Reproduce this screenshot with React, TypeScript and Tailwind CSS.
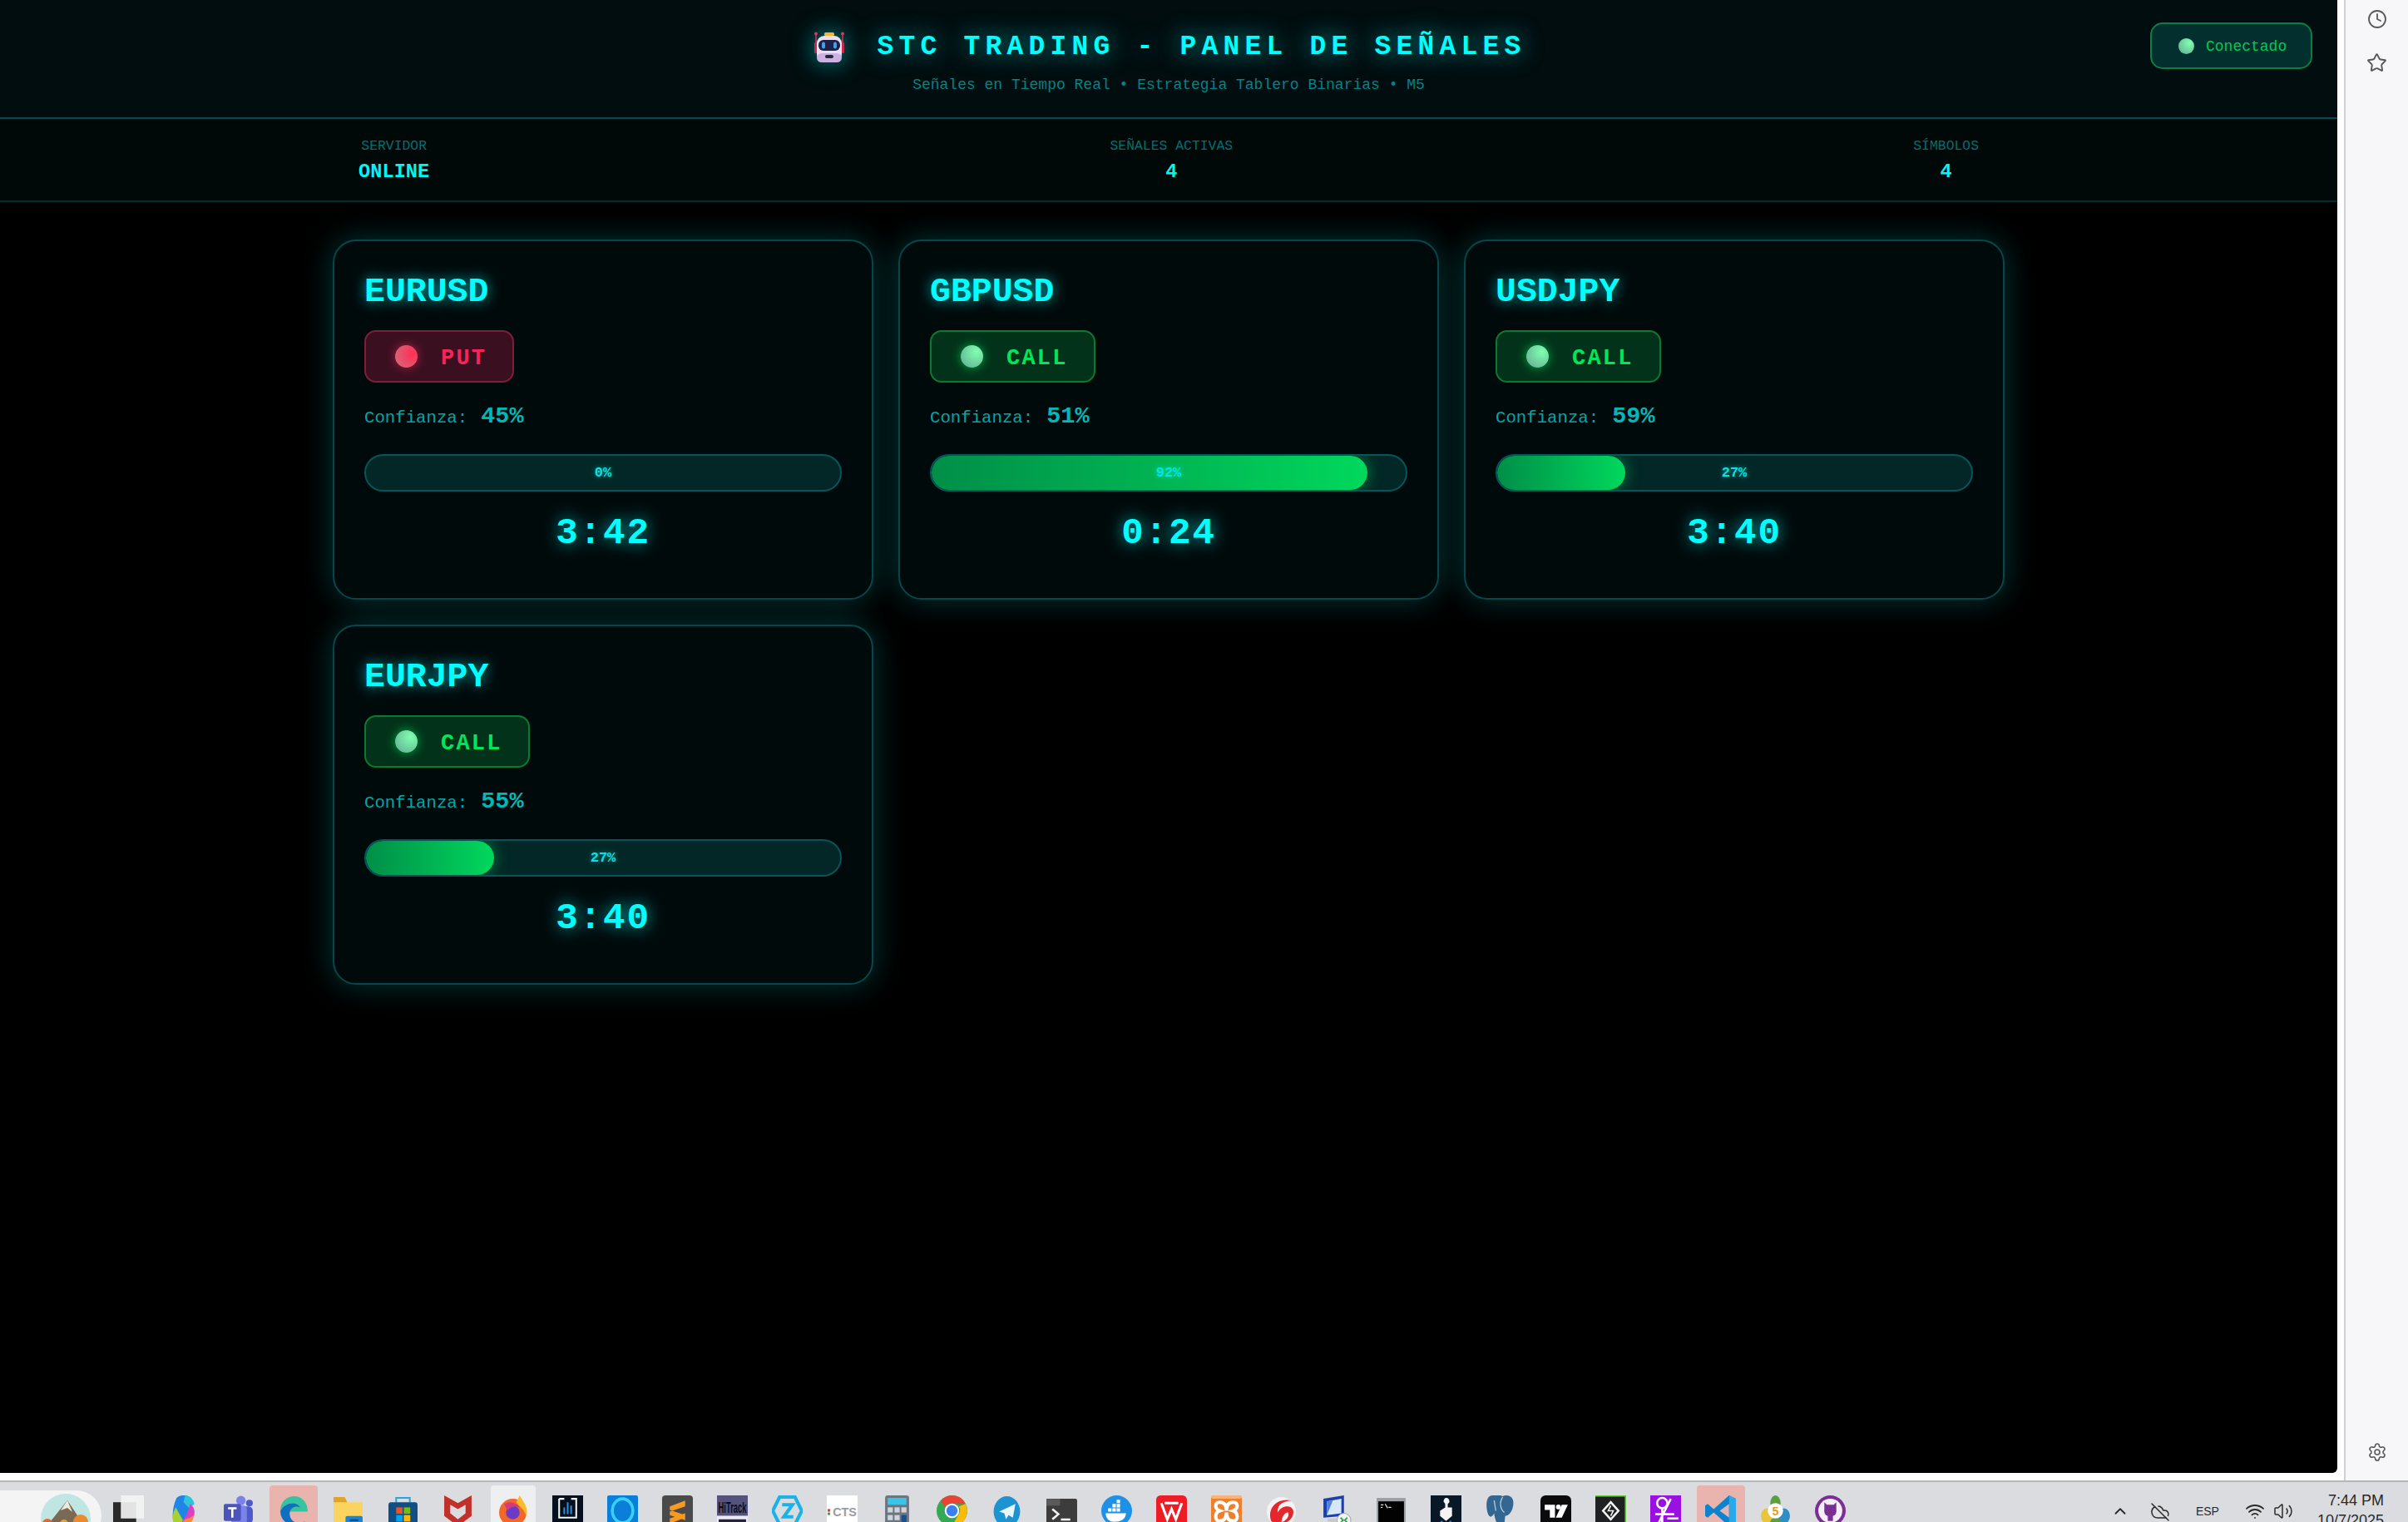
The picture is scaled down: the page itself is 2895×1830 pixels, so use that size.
import React from 'react';
import { Clock, Star, Settings, ChevronUp, Wifi, Volume2, CloudOff } from 'lucide-react';

interface Signal {
  symbol: string;
  side: 'PUT' | 'CALL';
  confidence: number;
  progress: number;
  timer: string;
}

const signals: Signal[] = [
  { symbol: 'EURUSD', side: 'PUT', confidence: 45, progress: 0, timer: '3:42' },
  { symbol: 'GBPUSD', side: 'CALL', confidence: 51, progress: 92, timer: '0:24' },
  { symbol: 'USDJPY', side: 'CALL', confidence: 59, progress: 27, timer: '3:40' },
  { symbol: 'EURJPY', side: 'CALL', confidence: 55, progress: 27, timer: '3:40' },
];

function RobotIcon() {
  return (
    <svg width="38" height="38" viewBox="0 0 38 38" className="drop-shadow-[0_0_14px_rgba(0,255,255,0.55)]">
      <rect x="13" y="1" width="12" height="4" rx="1.5" fill="#f2b632" />
      <path d="M3 3 L3 14 M35 3 L35 14" stroke="#d8345a" strokeWidth="1.5" />
      <circle cx="3" cy="2.5" r="2" fill="#e8305a" />
      <circle cx="35" cy="2.5" r="2" fill="#e8305a" />
      <rect x="1" y="13" width="4" height="13" rx="1" fill="#c8284f" />
      <rect x="33" y="13" width="4" height="13" rx="1" fill="#c8284f" />
      <rect x="4" y="5" width="30" height="32" rx="9" fill="#e9dff0" />
      <rect x="4" y="26" width="30" height="11" rx="6" fill="#cbb2e2" />
      <rect x="6" y="10" width="26" height="13" rx="6" fill="#1d2145" />
      <rect x="10" y="12.5" width="4" height="8" rx="2" fill="#3fa0ee" />
      <rect x="24" y="12.5" width="4" height="8" rx="2" fill="#3fa0ee" />
      <rect x="14" y="28" width="10" height="4" rx="2" fill="#26243c" />
    </svg>
  );
}

function TaskIcon({ children }: { children: React.ReactNode }) {
  return (
    <svg width="37" height="37" viewBox="0 0 36 36">
      {children}
    </svg>
  );
}

const taskIcons: React.ReactNode[] = [
  <>
    <rect x="0" y="8" width="27" height="28" fill="#2a2a2a" />
    <rect x="9" y="0" width="27" height="27" fill="#f3f3f3" opacity="0.92" />
  </>,
  <>
    <path d="M10 3 Q14 -1 22 0 L28 12 L18 32 Q11 38 6 30 Q4 16 10 3Z" fill="#1f86e8" />
    <path d="M20 0 Q28 0 31 10 L25 15 L18 8Z" fill="#2fc4d8" />
    <path d="M9 14 L18 30 Q11 38 6 30 Q4 22 9 14Z" fill="#a8d030" />
    <path d="M26 10 Q35 17 28 30 Q22 38 13 36 L22 22Z" fill="#dc3fc4" />
    <path d="M20 28 Q31 26 33 17 L28 30 Q22 38 13 36Z" fill="#f58a3a" />
  </>,
  <>
    <circle cx="21" cy="6" r="5.5" fill="#7b83eb" />
    <circle cx="31" cy="9" r="4" fill="#5059c9" />
    <rect x="22" y="13" width="13" height="20" rx="5" fill="#5059c9" />
    <rect x="10" y="12" width="18" height="24" rx="4" fill="#7b83eb" />
    <rect x="1" y="10" width="20" height="20" rx="2" fill="#4b53bc" />
    <path d="M6 15 H16 M11 15 V26" stroke="#fff" strokeWidth="2.5" />
  </>,
  <>
    <path d="M3 18 C3 7 11 1 19 1 C29 1 35 9 35 19 L14 19 C15 14 21 11 26 14 C23 7 9 7 3 18Z" fill="#35c3a0" />
    <path d="M3 18 C9 7 23 7 26 14 C19 11 13 16 14 23 C15 31 24 35 32 30 C26 37 3 37 3 18Z" fill="#0f6fc0" />
  </>,
  <>
    <path d="M1 2 H14 L17 8 H35 V36 H1Z" fill="#fbd45f" />
    <path d="M1 2 H14 L17 8 H1Z" fill="#e0a428" />
    <rect x="15" y="24" width="20" height="12" rx="2" fill="#1485d8" />
    <rect x="20" y="28" width="10" height="2" fill="#0b4a80" />
  </>,
  <>
    <path d="M10 8 V3 H26 V8" fill="none" stroke="#29a5d8" strokeWidth="2" />
    <rect x="1" y="8" width="34" height="28" rx="3" fill="#0e4f86" />
    <rect x="10" y="14" width="7.5" height="7.5" fill="#f25022" />
    <rect x="19" y="14" width="7.5" height="7.5" fill="#7fba00" />
    <rect x="10" y="23" width="7.5" height="7.5" fill="#00a4ef" />
    <rect x="19" y="23" width="7.5" height="7.5" fill="#ffb900" />
  </>,
  <path d="M2 0 L18 9 L34 0 V24 L18 36 L2 24Z M9 11 V21 L18 28 L27 21 V11 L18 16Z" fill="#c0312b" fillRule="evenodd" />,
  <>
    <circle cx="18" cy="20" r="16" fill="#f2672a" />
    <path d="M26 0 C32 10 36 14 34 24 C30 14 24 12 22 8Z" fill="#fbbb2c" />
    <circle cx="18" cy="20" r="8" fill="#6b3bc8" />
    <path d="M8 10 C14 6 22 8 26 14 C20 12 14 14 12 18Z" fill="#d63a7a" />
  </>,
  <>
    <rect x="0" y="0" width="36" height="36" fill="#06101c" />
    <path d="M8 4 H14 M8 4 V26 H28 V4 H22" fill="none" stroke="#f4f4f4" strokeWidth="2" />
    <path d="M14 22 V14 M18 22 V8 M22 22 V12" stroke="#2a8fd8" strokeWidth="2" />
  </>,
  <>
    <rect x="0" y="0" width="36" height="36" rx="2" fill="#0a7ed8" />
    <ellipse cx="18" cy="18" rx="12" ry="14" fill="none" stroke="#35d2f5" strokeWidth="3.5" />
  </>,
  <>
    <rect x="0" y="0" width="36" height="36" rx="4" fill="#4a4a4a" />
    <path d="M27 6 L9 13 V19 L27 13Z M9 17 L27 23 V29 L9 23Z M27 26 L9 33 V27 L27 21Z" fill="#f79a1f" />
  </>,
  <>
    <rect x="0" y="0" width="36" height="24" fill="#55527e" />
    <rect x="0" y="24" width="36" height="12" fill="#ece9f4" />
    <rect x="2" y="28" width="32" height="6" fill="#26243c" />
    <text x="18" y="20" textAnchor="middle" fontSize="18" fontFamily="Liberation Sans" fontWeight="700" fill="#0c0c14" textLength="33" lengthAdjust="spacingAndGlyphs">HiTrack</text>
  </>,
  <>
    <path d="M9 2 H27 L35 18 L27 34 H9 L1 18Z" fill="none" stroke="#1ab2e8" strokeWidth="4" />
    <path d="M12 11 H24 L14 25 H25" fill="none" stroke="#1ab2e8" strokeWidth="4" />
  </>,
  <>
    <rect x="0" y="0" width="36" height="36" fill="#ffffff" />
    <rect x="1" y="16" width="3" height="3" fill="#d83a3a" />
    <rect x="1" y="20" width="3" height="3" fill="#3aa84a" />
    <text x="21" y="24" textAnchor="middle" fontSize="14" fontFamily="Liberation Sans" fontWeight="700" fill="#9a9ca2">CTS</text>
  </>,
  <>
    <rect x="4" y="0" width="28" height="36" rx="3" fill="#6c7680" />
    <rect x="7" y="3" width="22" height="8" fill="#38c5e8" />
    <rect x="7" y="14" width="6" height="6" fill="#d0d4d8" />
    <rect x="15" y="14" width="6" height="6" fill="#d0d4d8" />
    <rect x="23" y="14" width="6" height="6" fill="#d0d4d8" />
    <rect x="7" y="23" width="6" height="6" fill="#d0d4d8" />
    <rect x="15" y="23" width="6" height="6" fill="#d0d4d8" />
    <rect x="23" y="23" width="6" height="12" fill="#1a4f8e" />
  </>,
  <>
    <circle cx="18" cy="18" r="18" fill="#34a853" />
    <path d="M18 0 A18 18 0 0 1 34 10 H18 A8 8 0 0 0 10 14 L5 6 A18 18 0 0 1 18 0Z" fill="#ea4335" />
    <path d="M34 10 A18 18 0 0 1 18 36 L26 22 A8 8 0 0 0 26 13Z" fill="#fbbc05" />
    <circle cx="18" cy="18" r="8.5" fill="#fff" />
    <circle cx="18" cy="18" r="6.5" fill="#3a7ff0" />
  </>,
  <>
    <ellipse cx="18" cy="19" rx="15.5" ry="18" fill="#1e93d2" />
    <path d="M28 10 L9 19 L15 21 L17 28 L20 23 L25 26Z" fill="#eaf6fd" />
  </>,
  <>
    <rect x="0" y="4" width="36" height="32" rx="2" fill="#3c3c3c" />
    <rect x="0" y="4" width="16" height="8" fill="#5a5a5a" />
    <path d="M7 16 L14 22 L7 28" fill="none" stroke="#f2f2f2" strokeWidth="2.5" />
    <rect x="17" y="27" width="11" height="2.5" fill="#f2f2f2" />
  </>,
  <>
    <circle cx="18" cy="18" r="18" fill="#1d91e8" />
    <path d="M5 21 H29 Q28 31 15 31 Q6 31 5 21Z" fill="#fff" />
    <path d="M8 15 H12 V19 H8Z M13 15 H17 V19 H13Z M18 15 H22 V19 H18Z M13 10 H17 V14 H13Z M18 10 H22 V14 H18Z M18 5 H22 V9 H18Z" fill="#fff" />
  </>,
  <>
    <rect x="0" y="0" width="36" height="36" rx="5" fill="#f01c25" />
    <path d="M6 9 L13 28 L18 16 L23 28 L30 9 M10 9 H26" fill="none" stroke="#fff" strokeWidth="3" />
  </>,
  <>
    <rect x="0" y="0" width="36" height="36" rx="4" fill="#ee7f2c" />
    <rect x="0" y="0" width="36" height="4" rx="2" fill="#f9b27a" />
    <path d="M10 8 C18 8 18 16 18 18 C18 16 18 8 26 8 C32 8 32 16 26 18 C32 20 32 30 26 30 C18 30 18 22 18 20 C18 22 18 30 10 30 C4 30 4 20 10 18 C4 16 4 8 10 8Z" fill="none" stroke="#fff" strokeWidth="4" />
  </>,
  <>
    <circle cx="18" cy="19" r="17" fill="#f4f2f2" />
    <path d="M6 30 C1 16 12 2 30 6 C20 6 12 12 14 20 C17 12 30 10 32 18 C33 27 24 34 16 33 C22 30 28 26 26 20 C20 20 18 28 18 34 C13 35 9 33 6 30Z" fill="#e5262a" />
  </>,
  <>
    <path d="M3 4 L27 0 V24 L3 26Z" fill="#1a3fae" />
    <path d="M7 7 L24 4 V21 L7 23Z" fill="#d8e6fa" />
    <path d="M7 7 L14 6 L7 23Z" fill="#4f83dc" />
    <circle cx="27" cy="29" r="8" fill="#f4f4f4" stroke="#a6a6a6" />
    <path d="M23 26 L26 29 L23 32 M31 26 L28 29 L31 32" fill="none" stroke="#2fa84f" strokeWidth="1.8" />
    <rect x="8" y="27" width="10" height="8" fill="#c8c8c8" />
  </>,
  <>
    <rect x="1" y="3" width="34" height="33" fill="#9aa0a6" />
    <rect x="3" y="7" width="30" height="26" fill="#020202" />
    <path d="M6 11 H9 M6 14 H8 M11 10 L14 15 M15 14 H18" stroke="#e4e4e4" strokeWidth="1.2" />
  </>,
  <>
    <rect x="0" y="0" width="36" height="36" fill="#081827" />
    <path d="M18 3 Q22 3 22 8 L20 10 V14 H25 V24 L18 30 L11 24 V18 L17 14 V10 L15 7 Q16 3 18 3Z" fill="#f4f4f4" />
    <path d="M12 30 L18 35 L24 30" fill="none" stroke="#2f6fcf" strokeWidth="2" />
  </>,
  <>
    <path d="M8 0 C0 0 0 14 3 22 C5 27 8 25 10 21 C11 28 13 36 19 36 C23 36 22 29 23 24 C30 24 34 12 32 5 C30 0 24 -1 20 1 C16 -1 12 -1 8 0Z" fill="#336791" />
    <path d="M20 2 C16 8 17 16 22 20 M10 6 L12 18" fill="none" stroke="#b9d0e2" strokeWidth="1.2" />
  </>,
  <>
    <rect x="0" y="0" width="36" height="36" rx="6" fill="#0b0b0d" />
    <path d="M5 11 H17 V26 H11 V17 H5Z" fill="#fff" />
    <circle cx="21" cy="13.5" r="2.8" fill="#fff" />
    <path d="M25 11 H32 L25 26 H18Z" fill="#fff" />
  </>,
  <>
    <rect x="0" y="0" width="36" height="36" fill="#1f2024" />
    <rect x="0" y="0" width="36" height="1.5" fill="#65c83a" />
    <rect x="34.5" y="0" width="1.5" height="36" fill="#65c83a" />
    <path d="M18 8 L27 18 L18 28 L9 18Z" fill="none" stroke="#f4f4f4" strokeWidth="2.5" />
    <path d="M18 12 L15 18 H21 L18 24" fill="none" stroke="#f4f4f4" strokeWidth="1.5" />
  </>,
  <>
    <rect x="0" y="0" width="36" height="36" fill="#9a10e0" />
    <circle cx="14" cy="9" r="6" fill="none" stroke="#fff" strokeWidth="2.5" />
    <path d="M14 15 V36 M6 22 H28 M24 4 L10 32 M20 27 H33" stroke="#fff" strokeWidth="2.5" />
  </>,
  <>
    <path d="M28 0 L36 4 V32 L28 36 L10 20 L3 26 L0 24 V12 L3 10 L10 16Z M28 10 L17 18 L28 26Z" fill="#0a84d0" fillRule="evenodd" />
    <path d="M28 0 L36 4 V32 L28 36Z" fill="#29a9ea" />
  </>,
  <>
    <ellipse cx="18" cy="9" rx="6" ry="9" fill="#5c9e40" />
    <ellipse cx="8" cy="24" rx="7" ry="9" fill="#e8c53a" />
    <ellipse cx="28" cy="24" rx="7" ry="9" fill="#2f8fc4" />
    <ellipse cx="18" cy="31" rx="6" ry="5" fill="#5c9e40" />
    <circle cx="18" cy="18" r="9" fill="#fff" />
    <text x="18" y="23" textAnchor="middle" fontSize="14" fontFamily="Liberation Sans" fontWeight="700" fill="#e89a1c">5</text>
  </>,
  <>
    <circle cx="18" cy="18" r="18" fill="#7a2e96" />
    <circle cx="18" cy="18" r="14" fill="#f4eef7" />
    <path d="M11 8 L14 11 H22 L25 8 V15 Q26 23 21 24 V30 H15 V24 Q10 23 11 15Z" fill="#7a2e96" />
  </>,
];

function SignalCard({ symbol, side, confidence, progress, timer }: Signal) {
  const isCall = side === 'CALL';
  return (
    <div className="rounded-[28px] border-2 border-[#05474a] bg-[#010a0b] pt-[37px] px-[36px] pb-[53px] shadow-[0_0_36px_rgba(0,255,255,0.22)]">
      <h3 className="text-[41.5px] leading-[48px] font-bold text-[#00ffff] [text-shadow:0_0_16px_rgba(0,255,255,0.7)]">{symbol}</h3>
      <div
        className={
          isCall
            ? 'mt-[22px] flex h-[63px] w-fit items-center gap-[28px] rounded-[14px] border-2 border-[#0a7a32] bg-[#02331a] pl-[35px] pr-[31px]'
            : 'mt-[22px] flex h-[63px] w-fit items-center gap-[28px] rounded-[14px] border-2 border-[#7c1f3c] bg-[#3a1020] pl-[35px] pr-[31px]'
        }
      >
        <span
          className={
            isCall
              ? 'h-[27px] w-[27px] rounded-full bg-[radial-gradient(circle_at_70%_30%,#80ffb0,#5fa890)] shadow-[0_0_12px_rgba(0,255,100,0.6)]'
              : 'h-[27px] w-[27px] rounded-full bg-[radial-gradient(circle_at_75%_40%,#ff2f55,#d0707f)] shadow-[0_0_12px_rgba(255,40,90,0.6)]'
          }
        />
        <span
          className={
            isCall
              ? 'mt-[6px] text-[27px] leading-none tracking-[2.2px] font-bold text-[#00e65c]'
              : 'mt-[6px] text-[27px] leading-none tracking-[2.2px] font-bold text-[#f5245a]'
          }
        >
          {side}
        </span>
      </div>
      <div className="mt-[20px] flex h-[40px] items-baseline text-[#00a6a6]">
        <span className="text-[20.7px]">Confianza:</span>
        <span className="ml-[16px] text-[28.5px] font-bold text-[#00b8b8]">{confidence}%</span>
      </div>
      <div className="relative mt-[26px] h-[45px] overflow-hidden rounded-full border-2 border-[#05565a] bg-[#022726]">
        {progress > 0 && (
          <div
            className="h-full rounded-full bg-gradient-to-r from-[#008f48] to-[#00d85c] shadow-[0_0_18px_rgba(0,220,100,0.55)]"
            style={{ width: `${progress}%` }}
          />
        )}
        <span className="absolute inset-0 flex items-center justify-center text-[17px] font-bold text-[#00e5e5] [text-shadow:0_0_6px_rgba(0,255,255,0.5)]">
          {progress}%
        </span>
      </div>
      <div className="mt-[25px] text-center text-[44.3px] leading-[50px] tracking-[1.85px] font-bold text-[#00ffff] [text-shadow:0_0_20px_rgba(0,255,255,0.75)]">
        {timer}
      </div>
    </div>
  );
}

function Stat({ label, value }: { label: string; value: string }) {
  return (
    <div className="flex flex-col items-center">
      <span className="text-[16.4px] leading-[20px] text-[#036e70]">{label}</span>
      <span className="mt-[7px] text-[23.7px] leading-[28px] font-bold text-[#00f5f5]">{value}</span>
    </div>
  );
}

function Taskbar() {
  return (
    <div className="flex h-[50px] overflow-hidden border-t-2 border-[#b4b5b7] bg-[#dbdcdf]">
      <div className="mt-[10px] flex h-[60px] w-[121.5px] shrink-0 justify-end rounded-r-[30px] bg-[#f4f4f5] pr-[9px] pt-[4px]">
        <svg width="70" height="60" viewBox="0 0 70 60">
          <circle cx="36" cy="30" r="30" fill="#bfe6e2" />
          <path d="M14 38 L38 8 L58 38Z" fill="#7a6a55" />
          <path d="M38 8 L30 20 L38 17 L44 22Z" fill="#efe9dc" />
          <path d="M6 40 Q36 30 68 40 V60 H6Z" fill="#d9b04a" />
          <circle cx="54" cy="34" r="9" fill="#ec8a2d" />
          <circle cx="14" cy="36" r="6" fill="#e06a2a" />
          <circle cx="34" cy="36" r="5" fill="#e8a02e" />
        </svg>
      </div>
      {taskIcons.map((icon, i) => {
        const highlight = i === 3 || i === 29;
        const active = i === 7;
        return (
          <div key={i} className="flex w-[66px] shrink-0 justify-center">
            <div
              className={
                highlight
                  ? 'mt-[4px] flex w-[58px] justify-center rounded-t-[4px] bg-[#e9b3ae] pt-[12px]'
                  : active
                  ? 'mt-[4px] flex w-[54px] justify-center rounded-t-[4px] bg-[#eeeff0] pt-[12px]'
                  : 'mt-[4px] flex w-[54px] justify-center pt-[12px]'
              }
            >
              <TaskIcon>{icon}</TaskIcon>
            </div>
          </div>
        );
      })}
      <div className="ml-auto flex items-start pr-[29px] font-['Liberation_Sans',sans-serif] text-[#2a2a2a]">
        <ChevronUp className="mt-[24px] h-[22px] w-[22px]" strokeWidth={2} />
        <CloudOff className="ml-[25px] mt-[24px] h-[24px] w-[24px]" strokeWidth={1.5} />
        <span className="ml-[31px] mt-[25px] text-[14px] leading-[20px]">ESP</span>
        <Wifi className="ml-[31px] mt-[23px] h-[24px] w-[24px]" strokeWidth={1.8} />
        <Volume2 className="ml-[10px] mt-[23px] h-[24px] w-[24px]" strokeWidth={1.5} />
        <div className="ml-[29px] mt-[10px] flex flex-col items-end text-[18px] leading-[24px]">
          <span>7:44 PM</span>
          <span>10/7/2025</span>
        </div>
      </div>
    </div>
  );
}

export default function App() {
  return (
    <div className="flex h-[1830px] w-[2895px] flex-col overflow-hidden bg-white font-['Liberation_Mono',monospace]">
      <div className="flex h-[1780px]">
        <div className="w-[2810px] shrink-0">
          <div className="flex h-[1771px] flex-col rounded-br-[6px] bg-black">
            {/* Header */}
            <header className="grid h-[143px] grid-cols-[1fr_auto_1fr] border-b-2 border-[#034c52] bg-[#010d0f] px-[30px]">
              <div />
              <div className="flex flex-col items-center pt-[36px]">
                <div className="ml-[3px] flex items-center gap-[38px]">
                  <RobotIcon />
                  <h1 className="text-[33px] leading-[42px] tracking-[6.2px] font-bold text-[#00ffff] [text-shadow:0_0_28px_rgba(0,255,255,0.7)]">
                    STC TRADING - PANEL DE SEÑALES
                  </h1>
                </div>
                <p className="mt-[12px] text-[18px] leading-[24px] text-[#028385]">
                  Señales en Tiempo Real • Estrategia Tablero Binarias • M5
                </p>
              </div>
              <div className="flex justify-end pt-[27px]">
                <div className="flex h-[56px] w-[195px] items-center gap-[14px] rounded-[15px] border-2 border-[#0a7f45] bg-[#03302f] pl-[32px]">
                  <span className="h-[19px] w-[19px] rounded-full bg-[radial-gradient(circle_at_70%_30%,#80ffb0,#5fa890)]" />
                  <span className="mt-[3px] text-[18px] text-[#00c853]">Conectado</span>
                </div>
              </div>
            </header>

            {/* Stats */}
            <div className="h-[100px] border-b-2 border-[#022c30] bg-[#010808] pt-[23px]">
              <div className="mx-auto flex w-[2010px] justify-between px-[31px]">
                <Stat label="SERVIDOR" value="ONLINE" />
                <Stat label="SEÑALES ACTIVAS" value="4" />
                <Stat label="SÍMBOLOS" value="4" />
              </div>
            </div>

            {/* Cards */}
            <main className="mx-auto mt-[45px] grid w-[2010px] grid-cols-3 items-start gap-[30px]">
              {signals.map((s) => (
                <SignalCard key={s.symbol} {...s} />
              ))}
            </main>
          </div>
        </div>

        {/* Browser sidebar */}
        <aside className="ml-[8px] flex w-[77px] flex-col items-center border-l-2 border-[#cfd0d2] bg-[#f7f7fa] text-[#57575c]">
          <Clock className="mt-[11px] h-[24px] w-[24px]" strokeWidth={1.8} />
          <Star className="mt-[28px] h-[25px] w-[25px]" strokeWidth={1.8} />
          <Settings className="mt-auto mb-[22px] h-[24px] w-[24px]" strokeWidth={1.6} />
        </aside>
      </div>
      <Taskbar />
    </div>
  );
}
